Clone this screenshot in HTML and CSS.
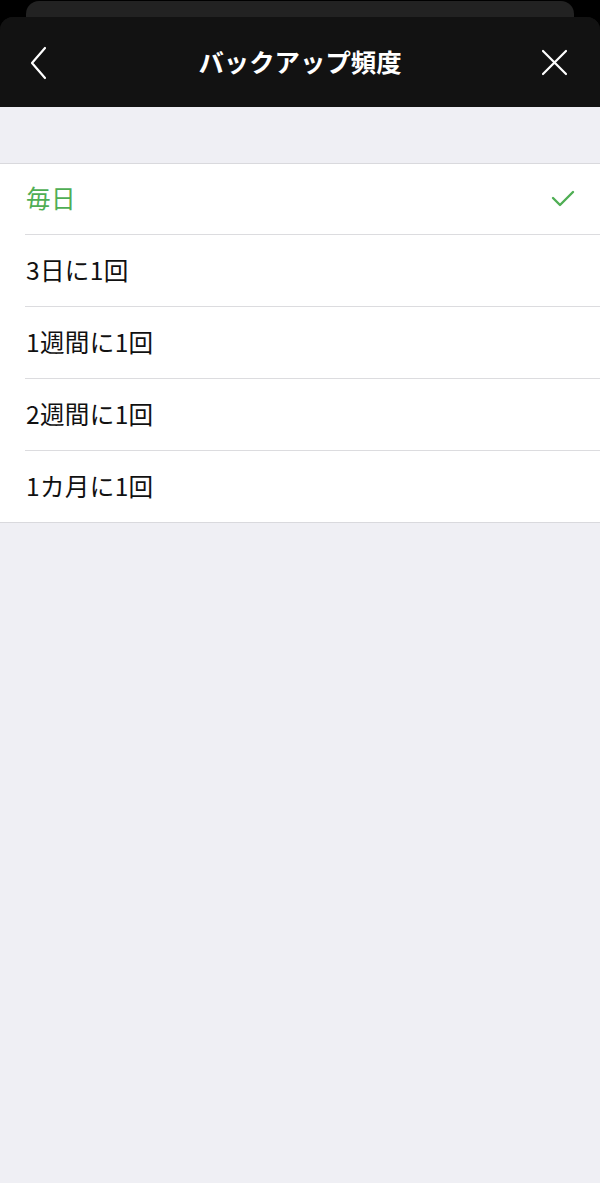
FILE: index.html
```html
<!DOCTYPE html>
<html lang="ja">
<head>
<meta charset="utf-8">
<link rel="stylesheet" href="styles.css">
</head>
<body>
<div class="screen">
  <div class="back-card"></div>
  <div class="sheet">
    <header class="nav">
      <svg class="nav-back" width="24" height="36" viewBox="0 0 24 36"><polyline points="15,2 2,17 15,32" fill="none" stroke="#fff" stroke-width="2.2" stroke-linecap="round" stroke-linejoin="round"/></svg>
      <h1 class="nav-title">バックアップ頻度</h1>
      <svg class="nav-close" width="28" height="28" viewBox="0 0 28 28"><path d="M2 2 L25 25 M25 2 L2 25" stroke="#fff" stroke-width="2.2" stroke-linecap="round"/></svg>
    </header>
    <main class="content">
      <ul class="list">
        <li class="row selected"><span>毎日</span>
          <svg class="check" width="24" height="18" viewBox="0 0 24 18"><polyline points="2,8 9,15 22,2" fill="none" stroke="#4fae54" stroke-width="2.4" stroke-linecap="round" stroke-linejoin="round"/></svg>
        </li>
        <li class="row"><span>3日に1回</span></li>
        <li class="row"><span>1週間に1回</span></li>
        <li class="row"><span>2週間に1回</span></li>
        <li class="row"><span>1カ月に1回</span></li>
      </ul>
    </main>
  </div>
</div>
</body>
</html>
```

FILE: styles.css
```css
* { box-sizing: border-box; margin: 0; padding: 0; }
html, body { width: 600px; height: 1183px; overflow: hidden; }
body {
  background: #000;
  font-family: "Noto Sans CJK JP", "Noto Sans", sans-serif;
}
.screen {
  height: 1183px;
  display: flex;
  flex-direction: column;
  padding-top: 1px;
}
.back-card {
  height: 40px;
  margin: 0 26px -24px;
  background: #222222;
  border-radius: 13px 13px 0 0;
  flex-shrink: 0;
}
.sheet {
  flex: 1;
  display: flex;
  flex-direction: column;
  border-radius: 13px 13px 0 0;
  overflow: hidden;
  background: #121212;
  position: relative;
}
.nav {
  height: 90px;
  display: flex;
  align-items: center;
  justify-content: center;
  position: relative;
  background: #121212;
  flex-shrink: 0;
}
.nav-title {
  color: #fff;
  font-size: 25.4px;
  font-weight: 700;
  letter-spacing: 0;
  margin-top: -3px;
}
.nav-back {
  position: absolute;
  left: 30px;
  top: 29px;
}
.nav-close {
  position: absolute;
  left: 541px;
  top: 32px;
}
.content {
  flex: 1;
  background: #efeff4;
  padding-top: 56px;
}
.list {
  list-style: none;
  background: #fff;
  border-top: 1px solid #d9d9dd;
  border-bottom: 1px solid #d9d9dd;
}
.row {
  height: 72px;
  margin-left: 25px;
  padding-right: 24px;
  padding-bottom: 4px;
  display: flex;
  align-items: center;
  justify-content: space-between;
  font-size: 24.6px;
  color: #111;
  border-top: 1px solid #dcdcdf;
}
.row:first-child { border-top: none; height: 70px; }
.row span { margin-left: 1px; letter-spacing: 0.3px; }
.row.selected { color: #4fae54; }
.check { margin-right: 1px; margin-bottom: -4px; }
```
